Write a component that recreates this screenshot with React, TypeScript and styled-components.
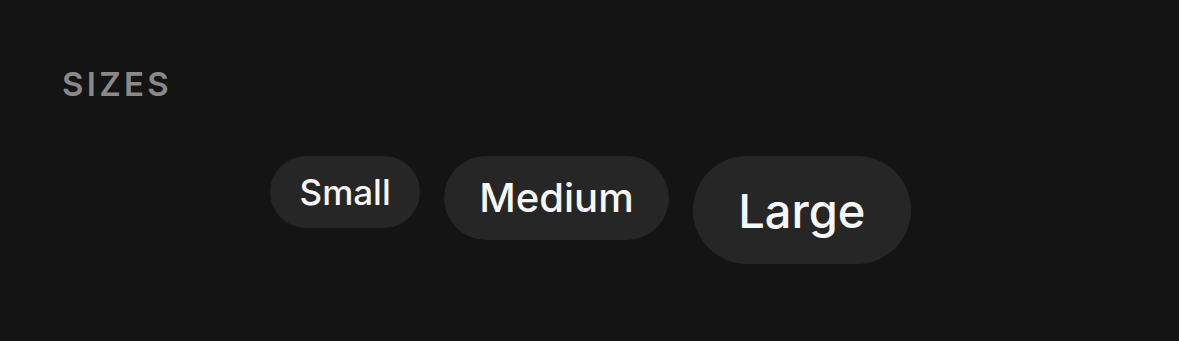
import React from "react";
import styled, { createGlobalStyle, css } from "styled-components";

const GlobalStyle = createGlobalStyle`
  html, body {
    margin: 0;
    padding: 0;
    background: #141414;
  }
  body {
    font-family: Inter, "Noto Sans", sans-serif;
    -webkit-font-smoothing: antialiased;
  }
`;

const Page = styled.div`
  width: 1179px;
  height: 341px;
  box-sizing: border-box;
  padding: 68px 62px 0;
  background: #141414;
  display: flex;
  flex-direction: column;
`;

const Label = styled.div`
  font-size: 33px;
  line-height: 1;
  font-weight: 600;
  letter-spacing: 0.1em;
  color: #8a8a8a;
`;

const Row = styled.div`
  margin-top: 55px;
  padding-left: 2px;
  display: flex;
  justify-content: center;
  align-items: flex-start;
  gap: 24px;
`;

type Size = "sm" | "md" | "lg";

const sizes = {
  sm: css`
    height: 72px;
    padding: 0 29.5px;
    font-size: 35px;
  `,
  md: css`
    height: 84px;
    padding: 0 35px;
    font-size: 40px;
  `,
  lg: css`
    height: 108px;
    padding: 0 45.5px;
    font-size: 47px;
  `,
};

const Pill = styled.button<{ $size: Size }>`
  box-sizing: border-box;
  display: inline-flex;
  align-items: center;
  justify-content: center;
  border: none;
  border-radius: 999px;
  background: #262626;
  color: #f7f7f7;
  font-family: Inter, "Noto Sans", sans-serif;
  font-weight: 500;
  line-height: 1;
  cursor: pointer;
  ${(p) => sizes[p.$size]}
`;

export default function App() {
  return (
    <>
      <GlobalStyle />
      <Page>
        <Label>SIZES</Label>
        <Row>
          <Pill $size="sm">Small</Pill>
          <Pill $size="md">Medium</Pill>
          <Pill $size="lg">Large</Pill>
        </Row>
      </Page>
    </>
  );
}
